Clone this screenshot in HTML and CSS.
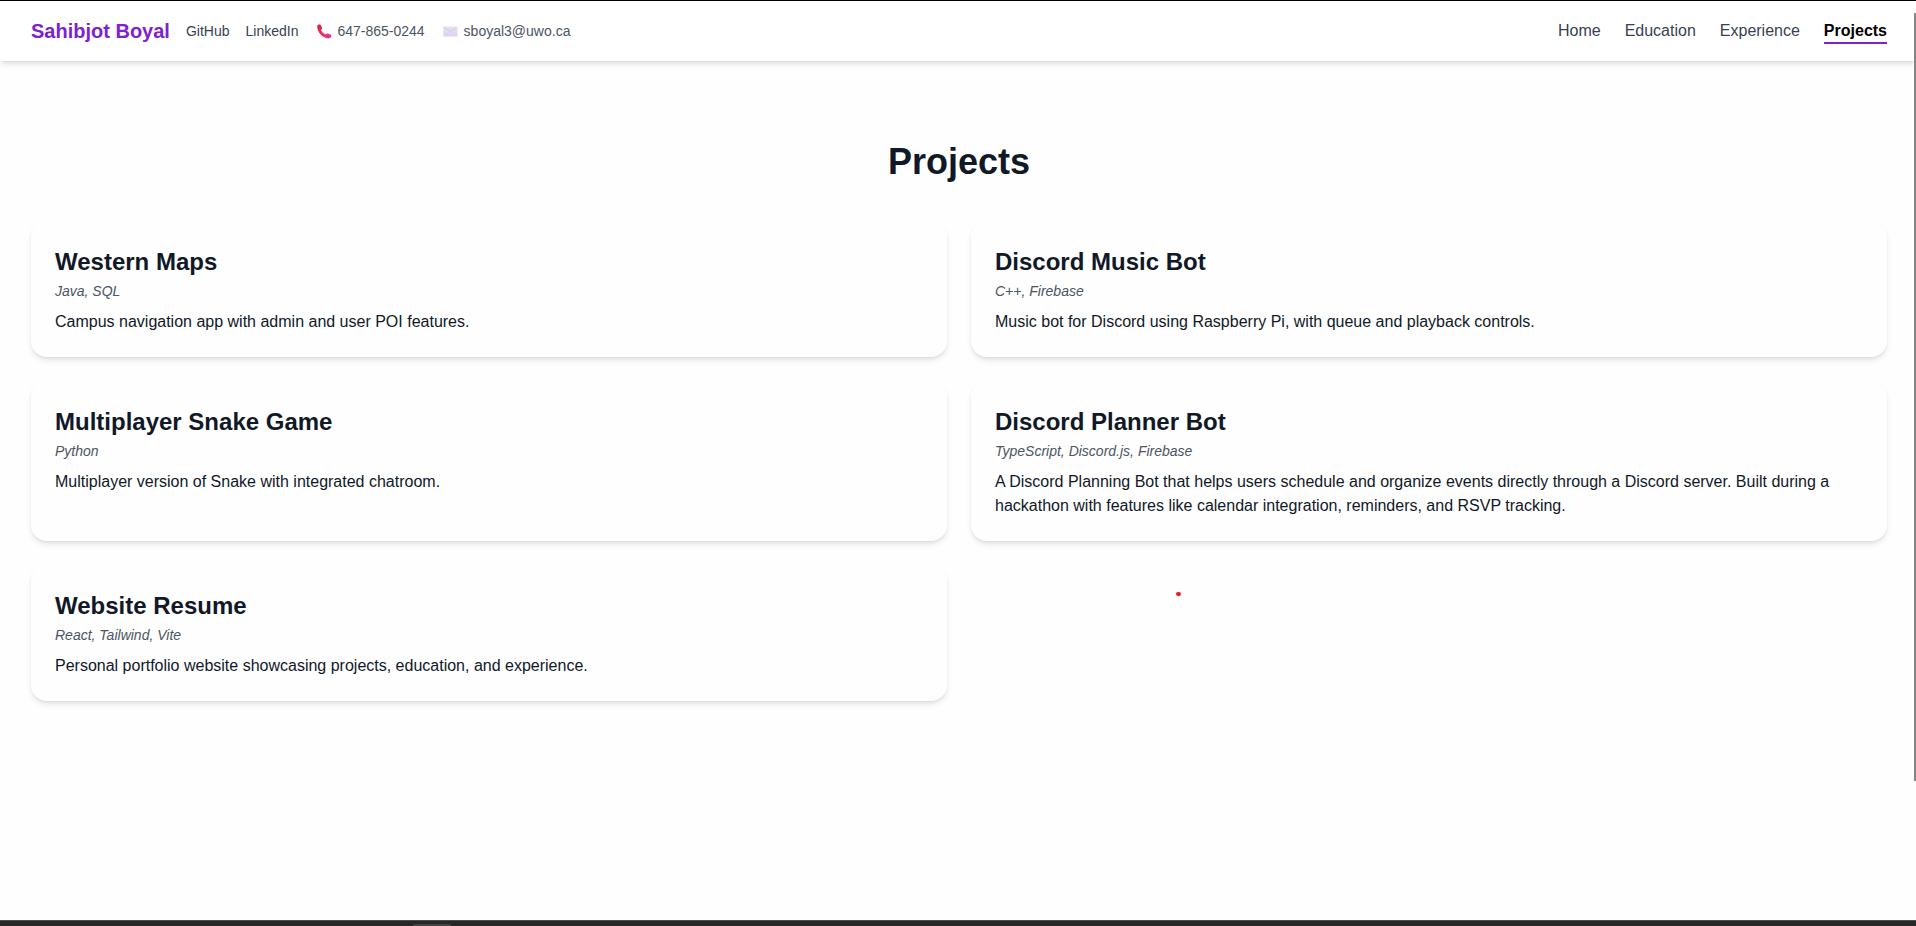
FILE: index.html
```html
<!DOCTYPE html>
<html lang="en">
<head>
<meta charset="utf-8">
<title>Sahibjot Boyal</title>
<link rel="stylesheet" href="styles.css">
</head>
<body>
<div class="screen">
  <header class="navbar">
    <div class="contact">
      <span class="brand">Sahibjot Boyal</span>
      <a class="profile">GitHub</a>
      <a class="profile linkedin">LinkedIn</a>
      <span class="detail phone">
        <svg class="icon" viewBox="0 0 15 15">
          <defs><linearGradient id="call" x1="0" y1="0" x2="1" y2="1"><stop offset="0" stop-color="#c6284f"/><stop offset=".45" stop-color="#ef2b55"/><stop offset="1" stop-color="#d33bb0"/></linearGradient></defs>
          <path fill="url(#call)" d="M1 .8C2.200 0 3.700.4 4.200 1.600L5 3.700C5.300 4.600 4.900 5.200 4 5.900C5 8 6.500 9.400 8.800 10.500C9.500 9.500 10.200 9.300 11 9.600L13.300 10.500C14.500 11 14.800 12.300 14 13.200C12.800 14.500 10.800 14.800 8.500 13.800C4.300 12 1.300 8.400.4 4.200C.1 2.700.2 1.500 1 .8Z"/>
        </svg>
        <span>647-865-0244</span>
      </span>
      <span class="detail email">
        <svg class="icon" viewBox="0 0 15 15">
          <defs><linearGradient id="mail" x1="0" y1="0" x2="0" y2="1"><stop offset="0" stop-color="#e9e2ec"/><stop offset="1" stop-color="#dfd0f4"/></linearGradient></defs>
          <rect x=".3" y="2.500" width="14.200" height="10" rx=".5" fill="url(#mail)"/>
          <path d="M.8 3L7.400 7.800L14 3" fill="none" stroke="#cdb9de" stroke-width=".6"/>
        </svg>
        <span>sboyal3@uwo.ca</span>
      </span>
    </div>
    <nav class="links">
      <a class="link">Home</a>
      <a class="link">Education</a>
      <a class="link">Experience</a>
      <a class="link active">Projects</a>
    </nav>
  </header>
  <main class="content">
    <h1 class="heading">Projects</h1>
    <div class="grid">
      <article class="card">
        <h2 class="title">Western Maps</h2>
        <p class="tech">Java, SQL</p>
        <p class="about">Campus navigation app with admin and user POI features.</p>
      </article>
      <article class="card">
        <h2 class="title">Discord Music Bot</h2>
        <p class="tech">C++, Firebase</p>
        <p class="about">Music bot for Discord using Raspberry Pi, with queue and playback controls.</p>
      </article>
      <article class="card">
        <h2 class="title">Multiplayer Snake Game</h2>
        <p class="tech">Python</p>
        <p class="about">Multiplayer version of Snake with integrated chatroom.</p>
      </article>
      <article class="card">
        <h2 class="title">Discord Planner Bot</h2>
        <p class="tech">TypeScript, Discord.js, Firebase</p>
        <p class="about">A Discord Planning Bot that helps users schedule and organize events directly through a Discord server. Built during a hackathon with features like calendar integration, reminders, and RSVP tracking.</p>
      </article>
      <article class="card">
        <h2 class="title">Website Resume</h2>
        <p class="tech">React, Tailwind, Vite</p>
        <p class="about">Personal portfolio website showcasing projects, education, and experience.</p>
      </article>
    </div>
  </main>
  <footer class="taskbar"><span class="tab"></span></footer>
  <span class="pointer"></span>
  <span class="scrollbar"></span>
</div>
</body>
</html>
```
FILE: styles.css
```css
* { box-sizing: border-box; }
body, h1, h2, p { margin: 0; }
body {
  font-family: "Liberation Sans", Arial, sans-serif;
  font-size: 16px;
  line-height: 24px;
  color: #111827;
  background: #fefefe;
}
.screen {
  position: relative;
  display: flex;
  flex-direction: column;
  height: 926px;
  overflow: hidden;
  border-top: 1px solid #000;
}
.navbar {
  display: flex;
  justify-content: space-between;
  align-items: center;
  height: 60px;
  flex: none;
  padding: 0 29px 0 31px;
  background: #fff;
  box-shadow: 0 4px 6px -1px rgba(0, 0, 0, .1), 0 2px 4px -2px rgba(0, 0, 0, .1);
}
.contact { display: flex; align-items: center; font-size: 14px; line-height: 20px; }
.brand { font-size: 20px; line-height: 28px; font-weight: 700; color: #7e22ce; }
.profile { margin-left: 16px; color: #374151; }
.detail { display: flex; align-items: center; gap: 5px; color: #4b5563; }
.phone { margin-left: 19px; }
.email { margin-left: 18px; gap: 6px; }
.icon { width: 15px; height: 15px; }
.links { display: flex; gap: 24px; }
.link { padding-top: 2px; line-height: 22px; color: #374151; border-bottom: 2px solid transparent; }
.active { color: #000; font-weight: 700; border-bottom-color: #7e22ce; }
.content { flex: 1; padding: 81px 29px 0 31px; }
.heading {
  margin-bottom: 39px;
  font-size: 36px;
  line-height: 40px;
  font-weight: 700;
  text-align: center;
}
.grid { display: grid; grid-template-columns: 1fr 1fr; gap: 24px; }
.card {
  padding: 25px 24px 23px;
  border-radius: 16px;
  background: #fefefe;
  box-shadow: 0 4px 6px -1px rgba(0, 0, 0, .1), 0 2px 4px -2px rgba(0, 0, 0, .1);
}
.title { margin-bottom: 3px; font-size: 24px; line-height: 32px; font-weight: 700; }
.tech { margin-bottom: 9px; font-size: 14px; line-height: 20px; font-style: italic; color: #4b5563; }
.taskbar {
  display: flex;
  align-items: flex-end;
  flex: none;
  height: 6px;
  padding-left: 413px;
  background: #272727;
  border-top: 1px solid #4c4c4c;
}
.tab { width: 38px; height: 2px; background: #434343; border-radius: 2px 2px 0 0; }
.pointer {
  position: absolute;
  left: 1176px;
  top: 591px;
  width: 5px;
  height: 4px;
  border-radius: 2px;
  background: #ed1c24;
}
.scrollbar {
  position: absolute;
  right: 0;
  top: 12px;
  width: 2px;
  height: 768px;
  background: #858585;
}
```
